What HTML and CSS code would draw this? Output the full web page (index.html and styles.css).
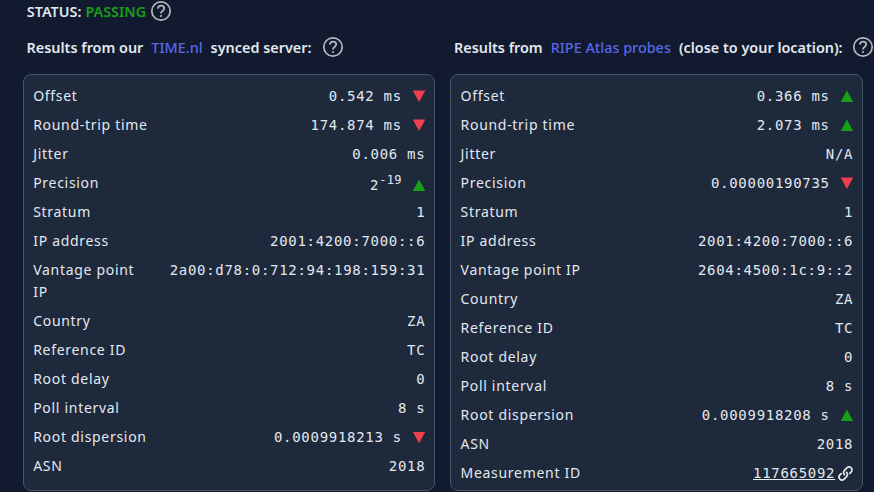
FILE: index.html
```html
<!DOCTYPE html>
<html lang="en">
<head>
<meta charset="utf-8">
<title>NTP status</title>
<link rel="stylesheet" href="styles.css">
</head>
<body>
<svg class="defs" width="0" height="0" aria-hidden="true">
  <symbol id="help" viewBox="0 0 24 24">
    <circle cx="12" cy="12" r="9.2" fill="none" stroke="currentColor" stroke-width="1.7"/>
    <path d="M8.9 9.6c.1-1.9 1.4-3 3.2-3 1.9 0 3.1 1.1 3.1 2.7 0 1.300-.7 1.900-1.700 2.600-1 .7-1.500 1.200-1.500 2.300v.4" fill="none" stroke="currentColor" stroke-width="1.8"/>
    <circle cx="12" cy="17" r="1.1" fill="currentColor"/>
  </symbol>
  <symbol id="link" viewBox="0 0 24 24">
    <path d="M13.500 10.500a4.200 4.200 0 0 1 0 6l-3.400 3.400a4.200 4.200 0 0 1-6-6l1.800-1.800M10.500 13.500a4.200 4.200 0 0 1 0-6l3.400-3.400a4.200 4.200 0 0 1 6 6l-1.800 1.800" fill="none" stroke="currentColor" stroke-width="2.400" stroke-linecap="round" stroke-linejoin="round"/>
  </symbol>
</svg>
<main class="page">
  <div class="status">
    <span>STATUS:</span> <span class="passing">PASSING</span>
    <svg class="help"><use href="#help"/></svg>
  </div>
  <div class="columns">
    <section class="column">
      <h2 class="heading">
        <span>Results from our</span><a class="link">TIME.nl</a><span>synced server:</span>
        <svg class="help help-wide"><use href="#help"/></svg>
      </h2>
      <dl class="card">
        <div class="row"><dt>Offset</dt><dd>0.542 ms<i class="tri down"></i></dd></div>
        <div class="row"><dt>Round-trip time</dt><dd>174.874 ms<i class="tri down"></i></dd></div>
        <div class="row"><dt>Jitter</dt><dd>0.006 ms</dd></div>
        <div class="row"><dt>Precision</dt><dd class="power">2<sup>-19</sup><i class="tri up"></i></dd></div>
        <div class="row"><dt>Stratum</dt><dd>1</dd></div>
        <div class="row"><dt>IP address</dt><dd>2001:4200:7000::6</dd></div>
        <div class="row"><dt>Vantage point IP</dt><dd>2a00:d78:0:712:94:198:159:31</dd></div>
        <div class="row"><dt>Country</dt><dd>ZA</dd></div>
        <div class="row"><dt>Reference ID</dt><dd>TC</dd></div>
        <div class="row"><dt>Root delay</dt><dd>0</dd></div>
        <div class="row"><dt>Poll interval</dt><dd>8 s</dd></div>
        <div class="row"><dt>Root dispersion</dt><dd>0.0009918213 s<i class="tri down"></i></dd></div>
        <div class="row"><dt>ASN</dt><dd>2018</dd></div>
      </dl>
    </section>
    <section class="column">
      <h2 class="heading">
        <span>Results from</span><a class="link">RIPE Atlas probes</a><span>(close to your location):</span>
        <svg class="help"><use href="#help"/></svg>
      </h2>
      <dl class="card">
        <div class="row"><dt>Offset</dt><dd>0.366 ms<i class="tri up"></i></dd></div>
        <div class="row"><dt>Round-trip time</dt><dd>2.073 ms<i class="tri up"></i></dd></div>
        <div class="row"><dt>Jitter</dt><dd>N/A</dd></div>
        <div class="row"><dt>Precision</dt><dd>0.00000190735<i class="tri down"></i></dd></div>
        <div class="row"><dt>Stratum</dt><dd>1</dd></div>
        <div class="row"><dt>IP address</dt><dd>2001:4200:7000::6</dd></div>
        <div class="row"><dt>Vantage point IP</dt><dd>2604:4500:1c:9::2</dd></div>
        <div class="row"><dt>Country</dt><dd>ZA</dd></div>
        <div class="row"><dt>Reference ID</dt><dd>TC</dd></div>
        <div class="row"><dt>Root delay</dt><dd>0</dd></div>
        <div class="row"><dt>Poll interval</dt><dd>8 s</dd></div>
        <div class="row"><dt>Root dispersion</dt><dd>0.0009918208 s<i class="tri up"></i></dd></div>
        <div class="row"><dt>ASN</dt><dd>2018</dd></div>
        <div class="row"><dt>Measurement ID</dt><dd><a class="mlink">117665092</a><svg class="chain"><use href="#link"/></svg></dd></div>
      </dl>
    </section>
  </div>
</main>
</body>
</html>
```
FILE: styles.css
```css
* { box-sizing: border-box; }
html, body { margin: 0; height: 100%; }
body {
  width: 874px;
  height: 492px;
  overflow: hidden;
  background: #111a2e;
  color: #e2e8f0;
  font-family: "Noto Sans", sans-serif;
  font-size: 14px;
  letter-spacing: 0.7px;
}
.defs { position: absolute; }
.page { padding: 0 0 0 23px; }
.status {
  display: flex;
  align-items: center;
  gap: 4px;
  height: 24px;
  padding-left: 3.8px;
  font-size: 14.4px;
  font-weight: 600;
  letter-spacing: 0;
  line-height: 24px;
}
.passing { color: #16a016; }
.help { width: 24px; height: 24px; flex: none; color: #b5b9be; }
.status .help { margin-top: -2px; margin-left: -1px; }
.columns {
  display: grid;
  grid-template-columns: 411.7px 412.2px;
  column-gap: 15.7px;
}
.column { min-width: 0; }
.heading {
  display: flex;
  align-items: center;
  gap: 8px;
  height: 50px;
  margin: 0;
  padding: 0 0 4px 3.6px;
  font-size: 14.4px;
  font-weight: 600;
  letter-spacing: 0;
  white-space: nowrap;
}
.heading span { position: relative; top: 0.5px; }
.heading .help-wide { margin-left: 2px; }
.link { color: #5a67e8; font-weight: 500; position: relative; top: 0.5px; }
.card {
  margin: 0;
  padding: 10px 8.4px 10px 9.2px;
  border: 1px solid #475569;
  border-radius: 8px;
  background: #1e293b;
  display: flex;
  flex-direction: column;
  gap: 6.6px;
  height: 417px;
}
.row {
  display: flex;
  justify-content: space-between;
  align-items: flex-start;
  gap: 24px;
  line-height: 22.4px;
}
.row dd {
  margin: 0;
  flex: none;
  display: flex;
  align-items: center;
  font-family: "DejaVu Sans Mono", monospace;
  font-size: 14px;
  white-space: nowrap;
}
.row dd.power { padding-top: 2px; margin-bottom: -2px; }
sup { font-size: 12px; line-height: 0; position: relative; top: -5px; vertical-align: baseline; letter-spacing: 0.3px; }
.tri { width: 12.5px; height: 11.500px; margin-left: 11px; display: block; }
.tri.down { background: #ef4050; clip-path: polygon(0 0, 100% 0, 50% 100%); }
.tri.up { background: #16a016; clip-path: polygon(50% 0, 100% 100%, 0 100%); }
.mlink { text-decoration: underline; }
.chain { width: 17px; height: 17px; margin-left: 2px; margin-right: -1px; color: #e2e8f0; }
```
